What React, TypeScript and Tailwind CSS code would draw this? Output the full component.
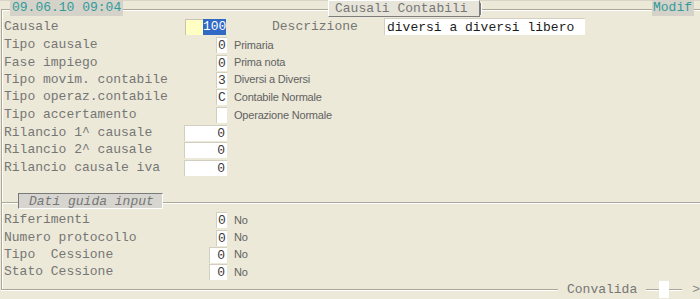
import React from 'react';

type Row = {
  label: string;
  h: string;
  value?: string;
  box?: string;
  desc?: string;
};

const topRows: Row[] = [
  { label: 'Tipo causale', h: 'h-[18px]', value: '0', box: 'w-[11px] text-center', desc: 'Primaria' },
  { label: 'Fase impiego', h: 'h-[17px]', value: '0', box: 'w-[11px] text-center', desc: 'Prima nota' },
  { label: 'Tipo movim. contabile', h: 'h-[17px]', value: '3', box: 'w-[11px] text-center', desc: 'Diversi a Diversi' },
  { label: 'Tipo operaz.contabile', h: 'h-[18px]', value: 'C', box: 'w-[11px] text-center', desc: 'Contabile Normale' },
  { label: 'Tipo accertamento', h: 'h-[18px]', value: '', box: 'w-[11px] text-center', desc: 'Operazione Normale' },
  { label: 'Rilancio 1^ causale', h: 'h-[17px]', value: '0', box: 'w-[43px] text-right pr-[2px]' },
  { label: 'Rilancio 2^ causale', h: 'h-[18px]', value: '0', box: 'w-[43px] text-right pr-[2px]' },
  { label: 'Rilancio causale iva', h: 'h-[18px]', value: '0', box: 'w-[43px] text-right pr-[2px]' },
];

const guideRows: Row[] = [
  { label: 'Riferimenti', h: 'h-[18px]', value: '0', box: 'w-[11px] text-center', desc: 'No' },
  { label: 'Numero protocollo', h: 'h-[17px]', value: '0', box: 'w-[11px] text-center', desc: 'No' },
  { label: 'Tipo  Cessione', h: 'h-[17px]', value: '0', box: 'w-[18px] text-right pr-[2px]', desc: 'No' },
  { label: 'Stato Cessione', h: 'h-[18px]', value: '0', box: 'w-[18px] text-right pr-[2px]', desc: 'No' },
];

function FieldRow({ row }: { row: Row }) {
  return (
    <div className={`${row.h} flex items-center`}>
      <div className="w-[224px] flex items-center">
        <span className="flex-1 whitespace-pre pl-[1px]">{row.label}</span>
        <span
          className={`${row.box} h-[16px] leading-[15px] bg-white border-l border-t border-[#d2cfc2] text-[#3a3a3a]`}
        >
          {row.value}
        </span>
      </div>
      {row.desc && (
        <span className="ml-[7px] font-['Liberation_Sans',Arial,sans-serif] text-[11px] text-[#626262] tracking-[-0.2px]">
          {row.desc}
        </span>
      )}
    </div>
  );
}

function Etched({ className }: { className: string }) {
  return <div className={`${className} h-[2px] border-t border-[#aca899] border-b border-b-white`} />;
}

export default function App() {
  return (
    <div className="relative w-[700px] h-[299px] overflow-hidden bg-[#ece9d8] font-['Liberation_Mono','Courier_New',monospace] text-[13px] text-[#767676]">
      <div className="h-[1px] bg-[#d8d5c8]" />

      {/* Main frame */}
      <div className="mt-[8px] ml-[1px] h-[281px] border-l border-t border-b border-[#aca899] shadow-[inset_1px_1px_0_#fff,0_1px_0_#fff] pt-[7px] pl-[1px]">
        {/* Causale row */}
        <div className="h-[19px] flex items-center">
          <div className="w-[223px] flex items-center">
            <span className="flex-1 pl-[1px]">Causale</span>
            <span className="w-[18px] h-[16px] bg-[#ffffc4] border-l border-t border-[#c8c4b4]" />
            <span className="w-[23px] h-[16px] leading-[16px] bg-[#316ac5] text-white text-right">100</span>
          </div>
          <span className="ml-[46px] w-[112px]">Descrizione</span>
          <span className="w-[201px] h-[17px] leading-[17px] bg-white border-l border-t border-[#d2cfc2] pl-[2px] text-[#1c1c1c] whitespace-nowrap">
            diversi a diversi libero
          </span>
        </div>

        {topRows.map((r) => (
          <FieldRow key={r.label} row={r} />
        ))}

        {/* Dati guida input separator */}
        <div className="mt-[16px] -ml-[1px] flex items-start">
          <Etched className="mt-[9px] w-[16px]" />
          <div className="w-[145px] h-[16px] leading-[15px] bg-[#d6d5d0] border-l border-t border-[#7a7a7a] border-r border-b border-r-white border-b-white pl-[10px] italic text-[#767676]">
            Dati guida input
          </div>
          <Etched className="mt-[9px] flex-1" />
        </div>

        <div className="mt-[2px]">
          {guideRows.map((r) => (
            <FieldRow key={r.label} row={r} />
          ))}
        </div>
      </div>

      {/* Header tabs over the frame border */}
      <div className="absolute top-0 left-0 right-0 h-[17px] flex items-start">
        <div className="ml-[10px] w-[113px] h-[16px] leading-[16px] bg-[#d5d2c9] text-[#2f9c9c] pl-[2px]">
          09.06.10 09:04
        </div>
        <div className="ml-[205px] w-[152px] h-[17px] leading-[16px] bg-[#e7e4d9] border-l border-t border-white border-r border-b border-r-[#7d7d7d] border-b-[#7d7d7d] pl-[6px] text-[#767676]">
          Causali Contabili
        </div>
        <div className="mt-[3px] w-[2px] h-[12px] border-l border-[#7d7d7d] border-r border-r-white" />
        <div className="ml-[170px] w-[42px] h-[16px] leading-[16px] bg-[#d5d2c9] text-[#2f9c9c] pl-[1px]">
          Modif
        </div>
      </div>

      {/* Convalida bar over the bottom border */}
      <div className="absolute left-[558px] right-0 top-[281px] h-[17px] flex items-center bg-[#ece9d8]">
        <span className="ml-[9px] w-[71px] leading-[16px]">Convalida</span>
        <Etched className="ml-[9px] w-[13px]" />
        <span className="w-[11px] h-[17px] bg-white" />
        <Etched className="w-[14px]" />
        <span className="ml-[10px] text-[#8a8a8a]">&gt;</span>
      </div>
    </div>
  );
}
